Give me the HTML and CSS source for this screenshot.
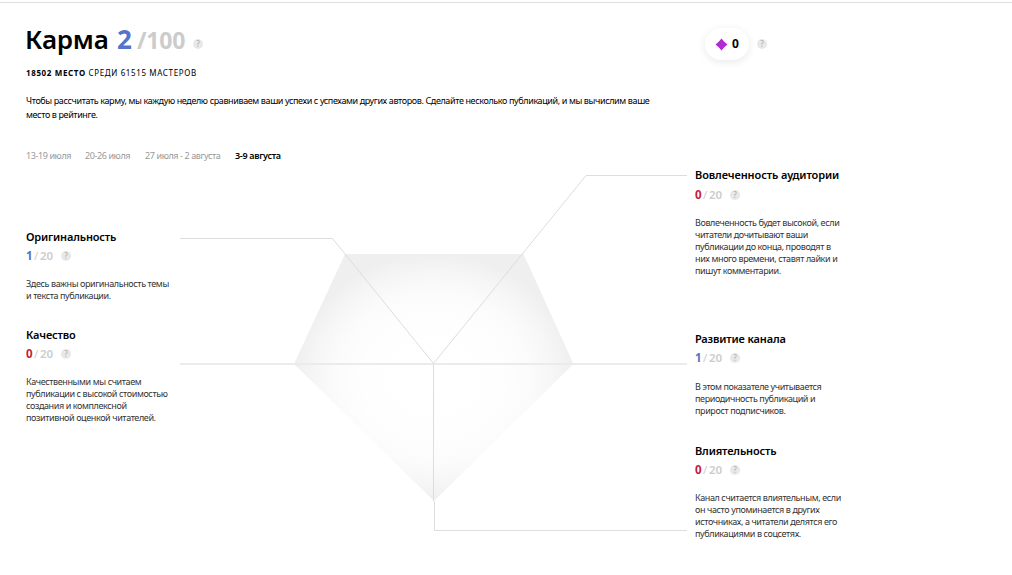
FILE: index.html
```
<!DOCTYPE html>
<html lang="ru">
<head>
<meta charset="utf-8">
<title>Карма</title>
<link rel="stylesheet" href="styles.css">
</head>
<body>
<div class="page">
  <header class="header">
    <div class="intro">
      <h1 class="karma"><span class="karma-name">Карма</span><span class="karma-value">2</span><span class="karma-max">/100</span><span class="help">?</span></h1>
      <div class="place"><b>18502 место</b> <span>среди 61515 мастеров</span></div>
      <p class="about">Чтобы рассчитать карму, мы каждую неделю сравниваем ваши успехи с успехами других авторов. Сделайте несколько публикаций, и мы вычислим ваше<br>место в рейтинге.</p>
    </div>
    <div class="bonus">
      <div class="pill">
        <svg class="diamond" width="13" height="13" viewBox="0 0 13 13"><path d="M6.500 0.500Q8 3.500 12.500 6.500Q8.700 8.700 6.500 12.500Q4.300 8.700 0.500 6.500Q4.300 4.300 6.500 0.500Z" fill="#b22bd2"/><path d="M6.500 1L12 6.500L6.500 12L1 6.500Z" fill="#b22bd2"/></svg>
        <b>0</b>
      </div>
      <span class="help">?</span>
    </div>
  </header>

  <nav class="weeks">
    <span class="week w1">13-19 июля</span>
    <span class="week w2">20-26 июля</span>
    <span class="week w3">27 июля - 2 августа</span>
    <span class="week w4 active">3-9 августа</span>
  </nav>

  <main class="chart">
    <div class="column left">
      <section class="item originality">
        <h2>Оригинальность</h2>
        <div class="score"><b class="blue">1</b><span class="slash">/</span><span class="max">20</span><span class="help">?</span></div>
        <p>Здесь важны оригинальность темы<br>и текста публикации.</p>
      </section>
      <section class="item quality">
        <h2>Качество</h2>
        <div class="score"><b class="red">0</b><span class="slash">/</span><span class="max">20</span><span class="help">?</span></div>
        <p>Качественными мы считаем<br>публикации с высокой стоимостью<br>создания и комплексной<br>позитивной оценкой читателей.</p>
      </section>
    </div>

    <svg class="radar" width="507" height="375" viewBox="180 167 507 375">
      <defs>
        <radialGradient id="shade">
          <stop offset="0" stop-color="#fff"/>
          <stop offset="0.5" stop-color="#fefefe"/>
          <stop offset="0.7" stop-color="#fbfbfb"/>
          <stop offset="0.85" stop-color="#f6f6f6"/>
          <stop offset="1" stop-color="#efefef"/>
        </radialGradient>
      </defs>
      <path d="M345 254H523.500L573.500 364L434 501L294 364Z" fill="url(#shade)"/>
      <g class="lines">
        <path d="M180 238.500H332.500L433.500 363.500L586 175.500H687"/>
        <path d="M180 364H687" class="axis"/>
        <path d="M433.500 363.500V501L434.500 502V530.500H687"/>
      </g>
    </svg>

    <div class="column right">
      <section class="item audience">
        <h2>Вовлеченность аудитории</h2>
        <div class="score"><b class="red">0</b><span class="slash">/</span><span class="max">20</span><span class="help">?</span></div>
        <p>Вовлеченность будет высокой, если<br>читатели дочитывают ваши<br>публикации до конца, проводят в<br>них много времени, ставят лайки и<br>пишут комментарии.</p>
      </section>
      <section class="item growth">
        <h2>Развитие канала</h2>
        <div class="score"><b class="blue">1</b><span class="slash">/</span><span class="max">20</span><span class="help">?</span></div>
        <p>В этом показателе учитывается<br>периодичность публикаций и<br>прирост подписчиков.</p>
      </section>
      <section class="item influence">
        <h2>Влиятельность</h2>
        <div class="score"><b class="red">0</b><span class="slash">/</span><span class="max">20</span><span class="help">?</span></div>
        <p>Канал считается влиятельным, если<br>он часто упоминается в других<br>источниках, а читатели делятся его<br>публикациями в соцсетях.</p>
      </section>
    </div>
  </main>
</div>
</body>
</html>
```
FILE: styles.css
```
* {
  box-sizing: border-box;
}
body {
  margin: 0;
  background: #fff;
  color: #000;
  font-family: "Noto Sans", "Open Sans", sans-serif;
  font-size: 9px;
  overflow: hidden;
}
h1, h2, p {
  margin: 0;
}
.page {
  margin-top: 2px;
  height: 573px;
  padding-left: 26px;
  border-top: 1px solid #ddd;
}
.header {
  display: flex;
  height: 145px;
}
.intro {
  width: 679px;
  padding-top: 18px;
  white-space: nowrap;
}
.karma {
  display: flex;
  align-items: baseline;
  height: 36px;
  margin-left: -1px;
  line-height: 36px;
  font-size: 26px;
}
.karma-name {
  width: 92px;
  font-weight: 600;
  letter-spacing: -0.2px;
}
.karma-value {
  width: 20px;
  color: #5573c8;
}
.karma-max {
  width: 56px;
  color: #ccc;
  font-size: 23px;
  letter-spacing: -0.2px;
}
.help {
  width: 10px;
  height: 10px;
  border-radius: 50%;
  background: #e8e8e8;
  color: #aaa;
  font-size: 8px;
  font-weight: 400;
  line-height: 10px;
  letter-spacing: 0;
  text-align: center;
}
.karma .help {
  align-self: center;
  margin-top: 10px;
}
.place {
  margin-top: 10px;
  line-height: 12px;
  font-size: 8px;
  letter-spacing: 0.63px;
  text-transform: uppercase;
}
.about {
  margin-top: 15px;
  line-height: 14px;
  letter-spacing: -0.38px;
}
.bonus {
  display: flex;
  align-items: center;
  gap: 8px;
  height: 32px;
  margin-top: 25px;
}
.pill {
  display: flex;
  align-items: center;
  justify-content: center;
  gap: 4px;
  width: 44px;
  height: 32px;
  border-radius: 16px;
  box-shadow: 0 2px 8px rgba(0, 0, 0, 0.09);
  font-size: 12px;
}
.pill b {
  margin-top: -1px;
}
.weeks {
  display: flex;
  height: 19px;
  line-height: 16px;
  color: #999;
  letter-spacing: -0.4px;
  white-space: nowrap;
}
.week.w1 { width: 59px; }
.week.w2 { width: 60px; }
.week.w3 { width: 90px; }
.week.active {
  color: #000;
  font-weight: 600;
  letter-spacing: -0.3px;
}
.chart {
  display: grid;
  grid-template-columns: 154px 507px 200px;
}
.radar {
  display: block;
}
.lines path {
  fill: none;
  stroke: #ddd;
}
.lines .axis {
  stroke-width: 2;
  stroke: #ebebeb;
}
.column {
  display: flex;
  flex-direction: column;
}
.left {
  padding-top: 62px;
  gap: 25px;
}
.right {
  padding-left: 8px;
}
.growth {
  margin-top: 54px;
}
.influence {
  margin-top: 26px;
}
.item {
  white-space: nowrap;
}
.item h2 {
  height: 16px;
  line-height: 16px;
  font-size: 11px;
  font-weight: 600;
  letter-spacing: -0.15px;
}
.audience h2 {
  letter-spacing: -0.1px;
}
.score {
  display: flex;
  align-items: flex-start;
  height: 16px;
  margin-top: 2px;
  padding-top: 1px;
  font-size: 11.5px;
  line-height: 16px;
  color: #ccc;
}
.audience .score {
  margin-top: 3px;
}
.score b {
  width: 8px;
}
.score .slash {
  width: 6px;
}
.score .max {
  width: 21px;
  font-weight: 600;
}
.score .help {
  margin-top: 3px;
}
.item p {
  margin-top: 15px;
  line-height: 12px;
  color: #333;
  letter-spacing: -0.39px;
}
.growth p {
  margin-top: 16px;
}
.blue {
  color: #5573c8;
}
.red {
  color: #c8193c;
}
```
